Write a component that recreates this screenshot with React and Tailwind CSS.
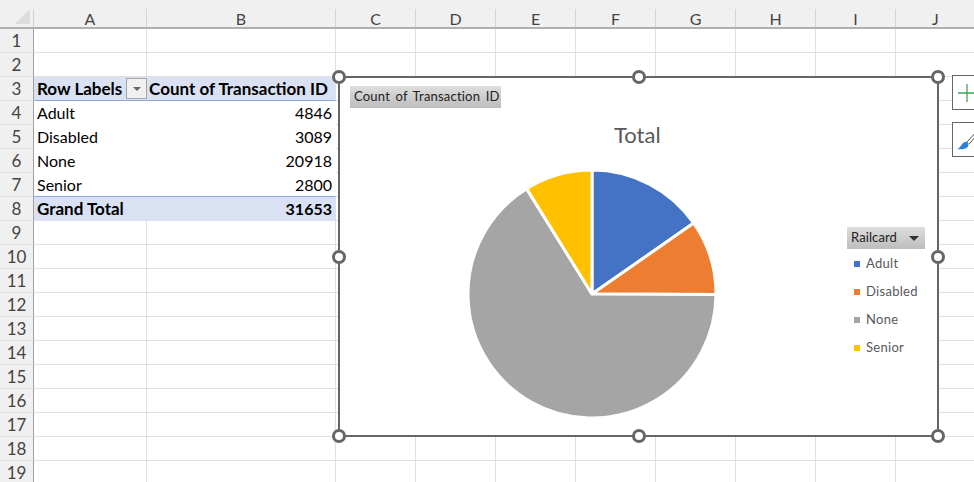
const columns = [
  { name: "A", w: "w-[113px]" },
  { name: "B", w: "w-[189px]" },
  { name: "C", w: "w-[80px]" },
  { name: "D", w: "w-[80px]" },
  { name: "E", w: "w-[80px]" },
  { name: "F", w: "w-[80px]" },
  { name: "G", w: "w-[80px]" },
  { name: "H", w: "w-[80px]" },
  { name: "I", w: "w-[80px]" },
  { name: "J", w: "w-[80px]" },
];

const pivot = {
  3: { a: "Row Labels", b: "Count of Transaction ID", kind: "head" },
  4: { a: "Adult", b: "4846" },
  5: { a: "Disabled", b: "3089" },
  6: { a: "None", b: "20918" },
  7: { a: "Senior", b: "2800" },
  8: { a: "Grand Total", b: "31653", kind: "total" },
};

const slices = [
  { name: "Adult", value: 4846, color: "#4472c4", swatch: "bg-[#4472c4]" },
  { name: "Disabled", value: 3089, color: "#ed7d31", swatch: "bg-[#ed7d31]" },
  { name: "None", value: 20918, color: "#a5a5a5", swatch: "bg-[#a5a5a5]" },
  { name: "Senior", value: 2800, color: "#ffc000", swatch: "bg-[#ffc000]" },
];

function piePaths() {
  const total = slices.reduce((s, x) => s + x.value, 0);
  let start = 0;
  return slices.map((s) => {
    const end = start + (s.value / total) * Math.PI * 2;
    const x1 = 125 + 124 * Math.sin(start);
    const y1 = 125 - 124 * Math.cos(start);
    const x2 = 125 + 124 * Math.sin(end);
    const y2 = 125 - 124 * Math.cos(end);
    const large = end - start > Math.PI ? 1 : 0;
    start = end;
    return { d: `M125 125 L${x1} ${y1} A124 124 0 ${large} 1 ${x2} ${y2} Z`, color: s.color };
  });
}

function Row({ n }) {
  const p = pivot[n];
  const fill = p && p.kind ? "bg-[#d9e1f2] font-bold text-[17px]" : "text-[16px]";
  let line = "border-b border-[#e0e0e0]";
  if (n === 3 || n === 7) line = "border-b border-[#8ea9db]";
  if (n === 8) line = "border-b border-[#d9e1f2]";
  if (p && !p.kind && n !== 7) line = "border-b border-transparent";

  return (
    <div className="flex h-6">
      <div className="w-[34px] shrink-0 bg-[#f0f0f0] border-r border-[#a0a0a0] border-b border-b-[#e0e0e0] pt-[1px] text-[#444] text-[17px] flex items-center justify-center">
        {n}
      </div>
      <div className={`w-[113px] shrink-0 pl-[3px] pt-[1px] flex items-center justify-between ${fill} ${line} ${p ? "" : "border-r border-r-[#e0e0e0]"}`}>
        {p && <span>{p.a}</span>}
        {n === 3 && (
          <span className="w-[21px] h-[21px] mb-[1px] bg-[#f0f0f0] border border-[#a6a6a6] flex items-center justify-center">
            <span className="w-0 h-0 border-x-[4px] border-x-transparent border-t-[4px] border-t-[#666]" />
          </span>
        )}
      </div>
      <div className={`w-[189px] shrink-0 pt-[1px] flex items-center justify-end ${n === 3 ? "pr-[7px]" : "pr-[3px]"} ${fill} ${line} border-r ${p ? "border-r-transparent" : "border-r-[#e0e0e0]"}`}>
        {p && <span className={`whitespace-nowrap ${n === 8 ? "text-[16px]" : ""}`}>{p.b}</span>}
      </div>
      {columns.slice(2).map((c) => (
        <div key={c.name} className={`${c.w} shrink-0 border-r border-b border-[#e0e0e0]`} />
      ))}
    </div>
  );
}

function Handle({ className }) {
  return <div className={`absolute w-[14px] h-[14px] rounded-full bg-white border-[3px] border-[#666] ${className}`} />;
}

function Chart() {
  return (
    <div className="absolute left-[338px] top-[76px] w-[601px] h-[361px] bg-white border-2 border-[#666] text-[#595959]">
      <div className="absolute left-[10px] top-[8px] w-[151px] h-[22px] bg-gradient-to-b from-[#dedede] to-[#bdbdbd] text-[#222] text-[13px] tracking-[0.2px] [word-spacing:2px] pl-1 flex items-center whitespace-nowrap">
        Count of Transaction ID
      </div>
      <div className="absolute left-[274px] top-[43px] text-[22px] leading-7">Total</div>
      <svg className="absolute left-[127px] top-[91px]" width="250" height="250" viewBox="0 0 250 250">
        {piePaths().map((p) => (
          <path key={p.color} d={p.d} fill={p.color} stroke="#fff" strokeWidth="3" strokeLinejoin="round" />
        ))}
      </svg>
      <div className="absolute left-[507px] top-[149px] w-[78px]">
        <div className="h-[22px] bg-gradient-to-b from-[#dedede] to-[#bdbdbd] text-[#222] text-[13px] tracking-[0.1px] pl-1 flex items-center justify-between pr-[6px]">
          Railcard
          <span className="w-0 h-0 border-x-[5px] border-x-transparent border-t-[5px] border-t-[#333]" />
        </div>
        <div className="flex flex-col gap-[8px] mt-[5px] pl-[7px] text-[13px] tracking-[0.3px] text-[#595959]">
          {slices.map((s) => (
            <div key={s.name} className="h-5 flex items-center gap-[6px]">
              <span className={`w-[6px] h-[6px] ${s.swatch}`} />
              {s.name}
            </div>
          ))}
        </div>
      </div>
      <Handle className="left-[-8px] top-[-8px]" />
      <Handle className="left-[292px] top-[-8px]" />
      <Handle className="left-[591px] top-[-8px]" />
      <Handle className="left-[-8px] top-[172px]" />
      <Handle className="left-[591px] top-[172px]" />
      <Handle className="left-[-8px] top-[351px]" />
      <Handle className="left-[292px] top-[351px]" />
      <Handle className="left-[591px] top-[351px]" />
    </div>
  );
}

export default function App() {
  const rows = Array.from({ length: 19 }, (_, i) => i + 1);

  return (
    <div className="relative w-[974px] h-[482px] overflow-hidden bg-white text-black text-[15px] font-['Lato','Open_Sans',sans-serif]">
      <div className="flex h-[29px] bg-[#f0f0f0] border-b-2 border-[#b0b0b0] pt-[9px]">
        <div className="w-[34px] shrink-0 border-r border-[#d0d0d0] relative">
          <div className="absolute right-[3px] bottom-[3px] w-0 h-0 border-l-[15px] border-l-transparent border-b-[15px] border-b-[#dcdcdc]" />
        </div>
        {columns.map((c) => (
          <div key={c.name} className={`${c.w} shrink-0 border-r border-[#d4d4d4] text-[#444] text-[16px] leading-[17px] flex items-center justify-center`}>
            {c.name}
          </div>
        ))}
      </div>
      {rows.map((n) => (
        <Row key={n} n={n} />
      ))}
      <Chart />
      <div className="absolute left-[952px] top-[75px] flex flex-col gap-[12px]">
        <div className="w-[30px] h-[35px] bg-white border border-[#666] flex items-center pl-[5px]">
          <svg width="18" height="20" viewBox="0 0 18 20">
            <path d="M9 1 V19 M0 10 H18" stroke="#3fa35c" strokeWidth="1.3" fill="none" />
          </svg>
        </div>
        <div className="w-[30px] h-[35px] bg-white border border-[#666] flex items-center pl-[4px]">
          <svg width="22" height="24" viewBox="0 0 22 24">
            <path d="M10 14 L20 3 M12 16 L22 5" stroke="#555" strokeWidth="1" fill="none" />
            <path d="M0 21 C4 20 4 15 8 14 C10 13 12 15 11.5 17 C11 21 5 22 0 21 Z" fill="#2f7fd6" />
          </svg>
        </div>
      </div>
    </div>
  );
}
